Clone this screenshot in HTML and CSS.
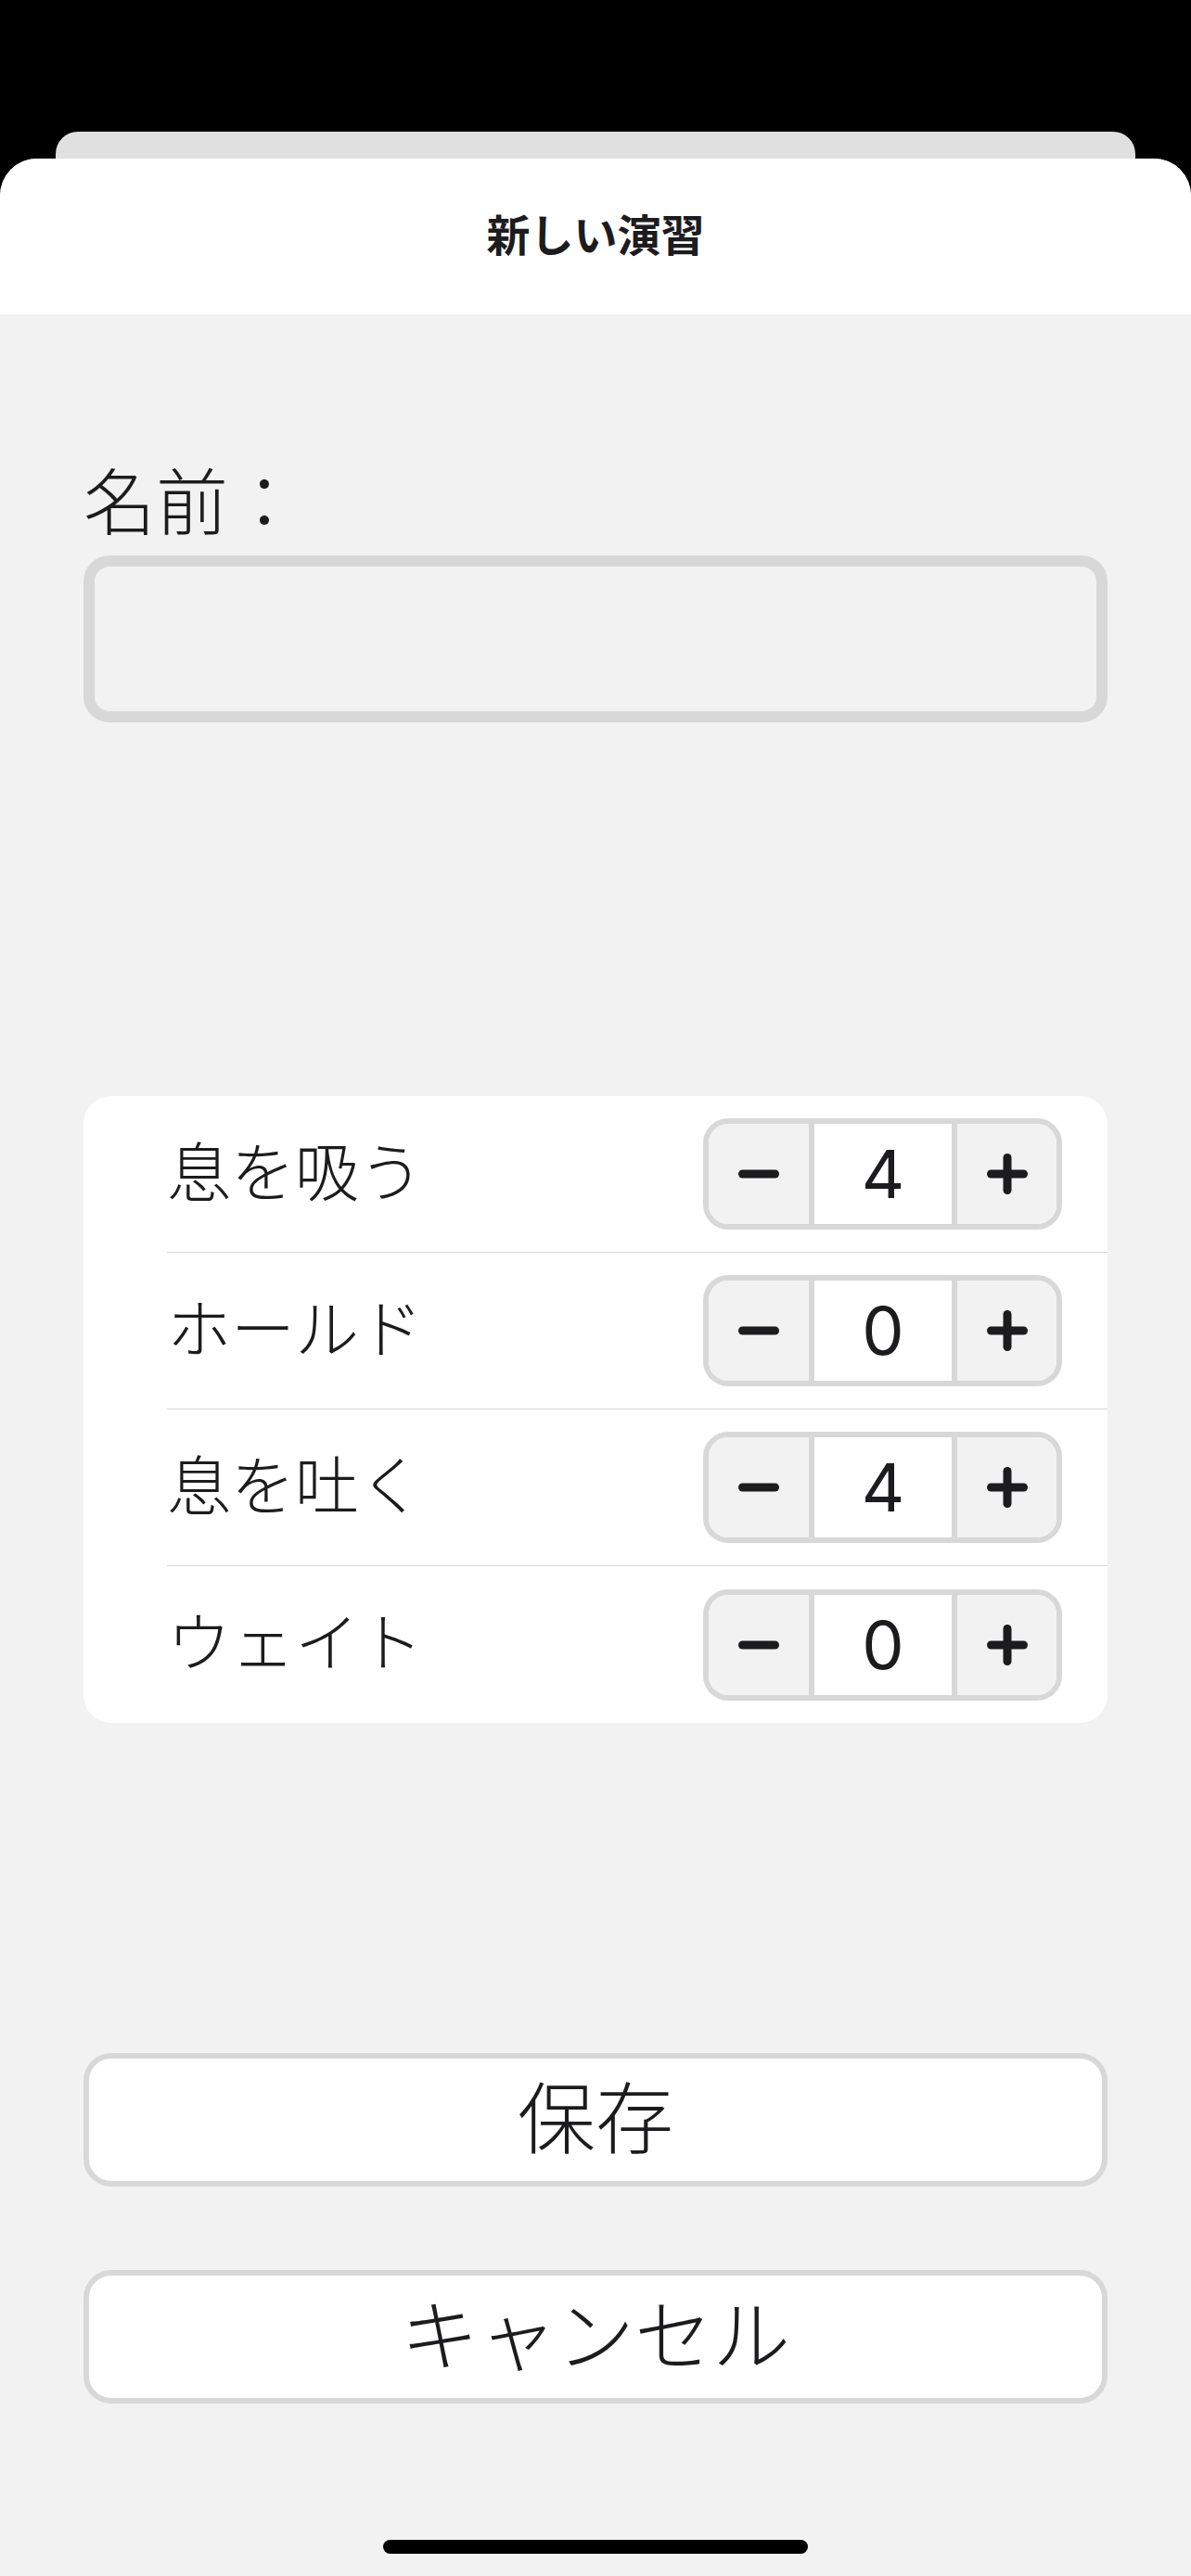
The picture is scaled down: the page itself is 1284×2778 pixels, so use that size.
FILE: index.html
```html
<!DOCTYPE html>
<html lang="ja">
<head>
<meta charset="utf-8">
<title>新しい演習</title>
<link rel="stylesheet" href="styles.css">
</head>
<body>
<div class="screen">
  <div class="back-card"></div>
  <div class="sheet">
    <header class="nav"><h1 class="nav-title">新しい演習</h1></header>
    <main class="content">
      <label class="field-label">名前：</label>
      <div class="text-field"></div>
      <section class="card">
        <div class="row">
          <span class="row-label">息を吸う</span>
          <div class="stepper">
            <button class="step-btn"><svg class="icon" viewBox="0 0 44 44"><line x1="4.5" y1="22" x2="39.5" y2="22"/></svg></button>
            <span class="step-value">4</span>
            <button class="step-btn plus"><svg class="icon" viewBox="0 0 44 44"><line x1="4.5" y1="22" x2="39.5" y2="22"/><line x1="22" y1="4.5" x2="22" y2="39.5"/></svg></button>
          </div>
        </div>
        <div class="row">
          <span class="row-label">ホールド</span>
          <div class="stepper">
            <button class="step-btn"><svg class="icon" viewBox="0 0 44 44"><line x1="4.5" y1="22" x2="39.5" y2="22"/></svg></button>
            <span class="step-value">0</span>
            <button class="step-btn plus"><svg class="icon" viewBox="0 0 44 44"><line x1="4.5" y1="22" x2="39.5" y2="22"/><line x1="22" y1="4.5" x2="22" y2="39.5"/></svg></button>
          </div>
        </div>
        <div class="row">
          <span class="row-label">息を吐く</span>
          <div class="stepper">
            <button class="step-btn"><svg class="icon" viewBox="0 0 44 44"><line x1="4.5" y1="22" x2="39.5" y2="22"/></svg></button>
            <span class="step-value">4</span>
            <button class="step-btn plus"><svg class="icon" viewBox="0 0 44 44"><line x1="4.5" y1="22" x2="39.5" y2="22"/><line x1="22" y1="4.5" x2="22" y2="39.5"/></svg></button>
          </div>
        </div>
        <div class="row">
          <span class="row-label">ウェイト</span>
          <div class="stepper">
            <button class="step-btn"><svg class="icon" viewBox="0 0 44 44"><line x1="4.5" y1="22" x2="39.5" y2="22"/></svg></button>
            <span class="step-value">0</span>
            <button class="step-btn plus"><svg class="icon" viewBox="0 0 44 44"><line x1="4.5" y1="22" x2="39.5" y2="22"/><line x1="22" y1="4.5" x2="22" y2="39.5"/></svg></button>
          </div>
        </div>
      </section>
      <button class="action save">保存</button>
      <button class="action cancel">キャンセル</button>
      <div class="home-indicator"></div>
    </main>
  </div>
</div>
</body>
</html>
```
FILE: styles.css
```css
* {
  box-sizing: border-box;
  margin: 0;
  padding: 0;
}

html,
body {
  background: #000;
}

body {
  width: 1284px;
  height: 2778px;
  overflow: hidden;
  font-family: "Noto Sans CJK JP", "Noto Sans", sans-serif;
  color: #1c1c1e;
}

.screen {
  height: 2778px;
  padding-top: 142px;
  display: flex;
  flex-direction: column;
}

.back-card {
  flex: none;
  height: 29px;
  margin: 0 60px;
  background: #e0e0e0;
  border-radius: 24px 24px 0 0;
}

.sheet {
  flex: 1;
  display: flex;
  flex-direction: column;
  background: #f2f2f2;
  border-radius: 40px 40px 0 0;
  overflow: hidden;
}

.nav {
  flex: none;
  height: 168px;
  padding-bottom: 10px;
  background: #fff;
  display: flex;
  align-items: center;
  justify-content: center;
}

.nav-title {
  font-size: 47px;
  font-weight: 700;
  line-height: 1;
  color: #1c1c1e;
}

.content {
  flex: 1;
  display: flex;
  flex-direction: column;
  padding: 151px 90px 0;
}

.field-label {
  font-size: 78px;
  line-height: 94px;
  font-weight: 300;
}

.text-field {
  margin-top: 15px;
  height: 180px;
  border: 12px solid #d8d8d8;
  border-radius: 28px;
}

.card {
  margin-top: 403px;
  background: #fff;
  border-radius: 30px;
  overflow: hidden;
}

.row {
  height: 169px;
  margin-left: 90px;
  padding-right: 49px;
  display: flex;
  align-items: center;
  justify-content: space-between;
  border-bottom: 1.5px solid #d6d6d6;
}

.row:last-child {
  border-bottom: none;
}

.row-label {
  font-size: 69px;
  line-height: 1;
  font-weight: 300;
  margin-bottom: 12px;
}

.stepper {
  display: flex;
  height: 120px;
  border: 6px solid #d8d8d8;
  border-radius: 27px;
  overflow: hidden;
}

.step-btn {
  width: 108px;
  border: none;
  background: #f2f2f2;
  display: flex;
  align-items: center;
  justify-content: center;
}

.step-btn.plus {
  width: 107px;
}

.icon {
  width: 44px;
  height: 44px;
  stroke: #1c1c1e;
  stroke-width: 9;
  stroke-linecap: round;
  fill: none;
}

.step-value {
  width: 160px;
  border-left: 6px solid #d8d8d8;
  border-right: 6px solid #d8d8d8;
  background: #fff;
  display: flex;
  align-items: center;
  justify-content: center;
  font-family: Inter, "Liberation Sans", sans-serif;
  font-size: 72px;
  font-weight: 400;
  line-height: 1;
}

.action {
  height: 144px;
  padding-bottom: 12px;
  border: 6px solid #d8d8d8;
  border-radius: 30px;
  background: #fff;
  font-family: "Noto Sans CJK JP", "Noto Sans", sans-serif;
  font-size: 84px;
  font-weight: 300;
  line-height: 1;
  color: #1c1c1e;
}

.action.save {
  margin-top: 356px;
}

.action.cancel {
  margin-top: 90px;
}

.home-indicator {
  width: 458px;
  height: 15px;
  margin: 147px auto 0;
  border-radius: 8px;
  background: #000;
}
```
